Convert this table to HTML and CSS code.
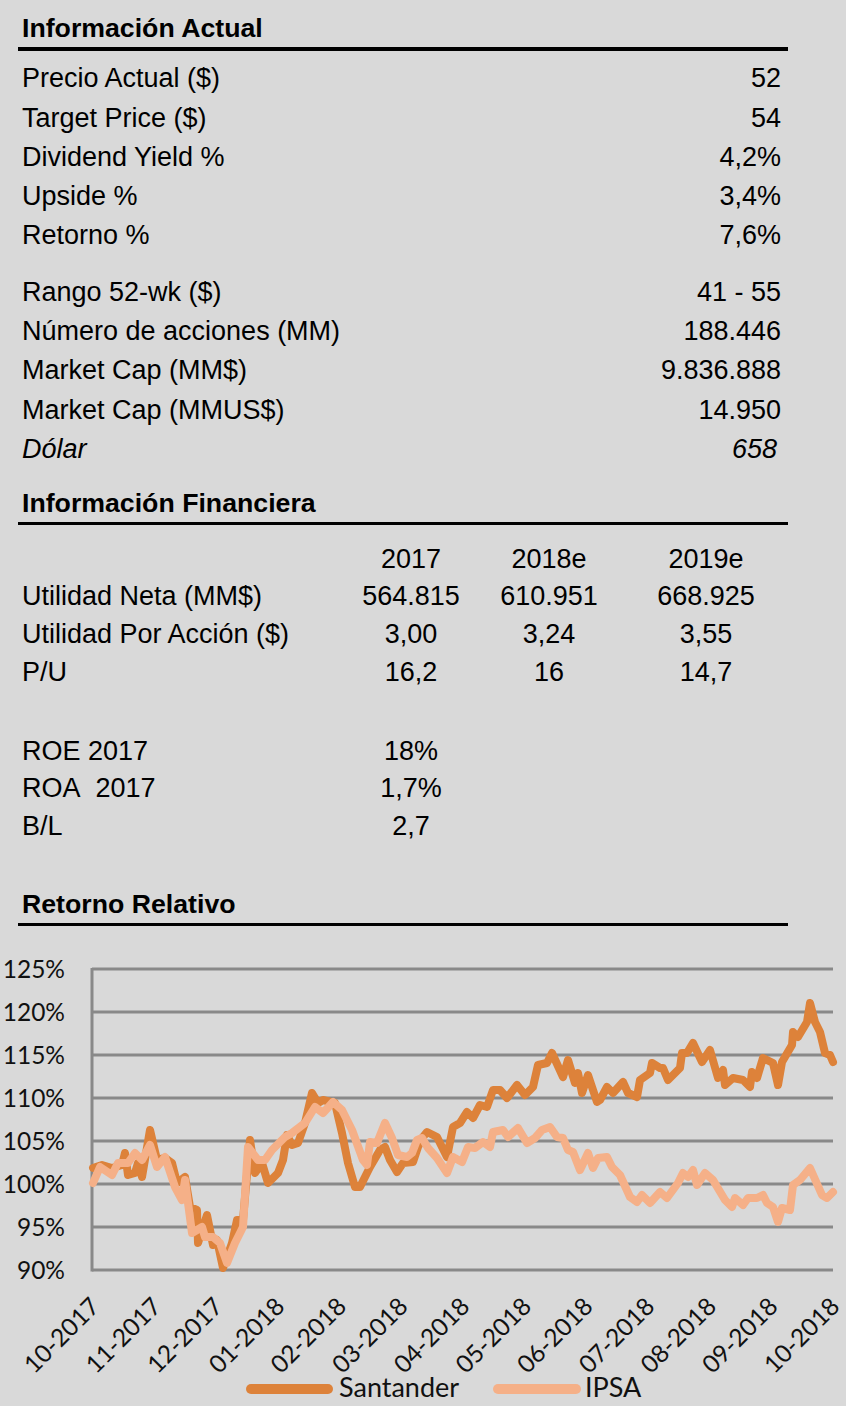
FILE: index.html
```html
<!DOCTYPE html>
<html lang="es">
<head>
<meta charset="utf-8">
<title>Información Actual</title>
<link rel="stylesheet" href="styles.css">
</head>
<body>
<section class="block">
  <h2 class="head head-first">Información Actual</h2>
  <div class="kv-list">
    <div class="kv"><span>Precio Actual ($)</span><span>52</span></div>
    <div class="kv"><span>Target Price ($)</span><span>54</span></div>
    <div class="kv"><span>Dividend Yield %</span><span>4,2%</span></div>
    <div class="kv"><span>Upside %</span><span>3,4%</span></div>
    <div class="kv"><span>Retorno %</span><span>7,6%</span></div>
  </div>
  <div class="kv-list kv-list-2">
    <div class="kv"><span>Rango 52-wk ($)</span><span>41 - 55</span></div>
    <div class="kv"><span>Número de acciones (MM)</span><span>188.446</span></div>
    <div class="kv"><span>Market Cap (MM$)</span><span>9.836.888</span></div>
    <div class="kv"><span>Market Cap (MMUS$)</span><span>14.950</span></div>
    <div class="kv kv-italic"><span>Dólar</span><span>658</span></div>
  </div>

  <h2 class="head head-fin">Información Financiera</h2>
  <div class="fin-table">
    <div class="fin-row"><span class="fin-label"></span><span>2017</span><span>2018e</span><span>2019e</span></div>
    <div class="fin-row"><span class="fin-label">Utilidad Neta (MM$)</span><span>564.815</span><span>610.951</span><span>668.925</span></div>
    <div class="fin-row"><span class="fin-label">Utilidad Por Acción ($)</span><span>3,00</span><span>3,24</span><span>3,55</span></div>
    <div class="fin-row"><span class="fin-label">P/U</span><span>16,2</span><span>16</span><span>14,7</span></div>
  </div>
  <div class="fin-table fin-ratios">
    <div class="fin-row"><span class="fin-label">ROE 2017</span><span>18%</span></div>
    <div class="fin-row"><span class="fin-label">ROA&nbsp; 2017</span><span>1,7%</span></div>
    <div class="fin-row"><span class="fin-label">B/L</span><span>2,7</span></div>
  </div>

  <h2 class="head head-chart">Retorno Relativo</h2>
</section>

<svg class="chart" width="846" height="480" viewBox="0 926 846 480" xmlns="http://www.w3.org/2000/svg">
  <g class="grid">
    <line x1="92" y1="969" x2="833" y2="969"/>
    <line x1="92" y1="1012" x2="833" y2="1012"/>
    <line x1="92" y1="1055" x2="833" y2="1055"/>
    <line x1="92" y1="1098" x2="833" y2="1098"/>
    <line x1="92" y1="1141" x2="833" y2="1141"/>
    <line x1="92" y1="1184" x2="833" y2="1184"/>
    <line x1="92" y1="1227" x2="833" y2="1227"/>
    <line x1="92" y1="1270" x2="833" y2="1270"/>
    <line x1="92" y1="968" x2="92" y2="1271.5"/>
  </g>
  <g class="ylab">
    <text x="65" y="978">125%</text>
    <text x="65" y="1021">120%</text>
    <text x="65" y="1064">115%</text>
    <text x="65" y="1107">110%</text>
    <text x="65" y="1150">105%</text>
    <text x="65" y="1193">100%</text>
    <text x="65" y="1236">95%</text>
    <text x="65" y="1279">90%</text>
  </g>
  <polyline class="s-santander" points="93,1168 102,1165 112,1168 122,1165 125,1153 128,1175 135,1173 138,1163 142,1177 150,1130 157,1160 165,1158 172,1163 177,1183 185,1177 190,1207 197,1210 198,1243 207,1215 213,1245 217,1240 223,1268 232,1243 237,1220 243,1220 250,1140 255,1173 262,1163 268,1183 278,1173 283,1160 287,1135 292,1145 298,1143 305,1123 312,1093 318,1103 323,1100 335,1103 342,1133 348,1163 355,1187 360,1187 370,1167 380,1150 385,1147 390,1160 397,1172 403,1163 413,1162 418,1147 423,1137 427,1132 437,1137 447,1157 453,1127 460,1123 467,1112 473,1118 480,1105 487,1107 493,1090 500,1090 507,1098 517,1085 525,1095 533,1087 538,1065 547,1063 552,1053 563,1077 568,1060 575,1083 578,1073 582,1093 588,1075 597,1102 600,1100 607,1087 613,1093 623,1082 628,1093 637,1097 640,1080 650,1073 652,1063 660,1068 663,1068 668,1080 680,1068 682,1053 687,1053 693,1043 702,1062 710,1050 718,1078 723,1070 725,1085 733,1078 743,1080 750,1087 752,1072 757,1078 763,1058 773,1063 778,1085 782,1062 792,1045 793,1032 798,1037 807,1022 810,1003 815,1022 820,1032 825,1053 830,1055 833,1062"/>
  <polyline class="s-ipsa" points="93,1183 100,1167 112,1175 118,1163 128,1163 135,1153 142,1160 150,1145 157,1167 165,1157 175,1187 182,1200 185,1180 192,1233 202,1227 205,1237 213,1237 220,1243 227,1263 235,1243 243,1227 248,1147 258,1160 265,1160 272,1150 285,1137 292,1133 305,1123 315,1107 323,1113 333,1102 342,1110 352,1130 363,1160 367,1165 370,1142 377,1143 385,1123 392,1138 398,1155 407,1157 412,1153 417,1140 422,1138 428,1148 437,1158 447,1173 453,1157 462,1162 468,1147 475,1148 483,1142 490,1147 493,1132 503,1130 508,1137 518,1128 527,1143 535,1138 542,1130 550,1127 557,1137 563,1138 568,1150 573,1152 580,1170 588,1153 593,1168 598,1158 607,1157 612,1167 620,1175 630,1197 637,1202 642,1195 650,1203 660,1192 667,1198 678,1183 683,1173 688,1177 693,1170 697,1185 705,1173 713,1180 725,1200 732,1207 735,1198 743,1205 748,1198 757,1198 763,1195 767,1203 773,1207 778,1222 782,1208 790,1210 793,1185 800,1180 810,1168 822,1195 827,1198 833,1192"/>
  <g class="xlab">
    <text transform="translate(101,1308) rotate(-45)">10-2017</text>
    <text transform="translate(162.7,1308) rotate(-45)">11-2017</text>
    <text transform="translate(224.3,1308) rotate(-45)">12-2017</text>
    <text transform="translate(286,1308) rotate(-45)">01-2018</text>
    <text transform="translate(347.7,1308) rotate(-45)">02-2018</text>
    <text transform="translate(409.3,1308) rotate(-45)">03-2018</text>
    <text transform="translate(471,1308) rotate(-45)">04-2018</text>
    <text transform="translate(532.7,1308) rotate(-45)">05-2018</text>
    <text transform="translate(594.3,1308) rotate(-45)">06-2018</text>
    <text transform="translate(656,1308) rotate(-45)">07-2018</text>
    <text transform="translate(717.7,1308) rotate(-45)">08-2018</text>
    <text transform="translate(779.3,1308) rotate(-45)">09-2018</text>
    <text transform="translate(841,1308) rotate(-45)">10-2018</text>
  </g>
  <g class="legend">
    <line class="sw-santander" x1="251" y1="1389" x2="328" y2="1389"/>
    <text x="339" y="1397">Santander</text>
    <line class="sw-ipsa" x1="498" y1="1389" x2="576" y2="1389"/>
    <text x="585" y="1397">IPSA</text>
  </g>
</svg>
</body>
</html>
```

FILE: styles.css
```css
html, body {
  margin: 0;
  padding: 0;
}

body {
  width: 846px;
  height: 1406px;
  overflow: hidden;
  background: #d9d9d9;
  color: #000;
  font-family: "Liberation Sans", Arial, sans-serif;
}

.block {
  margin-left: 18px;
  width: 770px;
}

.head {
  margin: 0;
  font-size: 26.7px;
  font-weight: 700;
  line-height: 30px;
  padding: 0 0 4px 4px;
  border-bottom: 3px solid #000;
}

.head-first {
  padding-top: 13px;
  border-bottom-width: 4px;
}

.head-fin {
  margin-top: 18.6px;
}

.head-chart {
  margin-top: 43.7px;
}

.kv-list {
  margin-top: 8.4px;
  font-size: 27px;
  line-height: 39.2px;
}

.kv-list-2 {
  margin-top: 17.5px;
}

.kv {
  display: flex;
  justify-content: space-between;
  padding: 0 7px 0 4px;
}

.kv-italic {
  font-style: italic;
  padding-right: 11px;
}

.fin-table {
  margin-top: 16.1px;
  font-size: 27px;
  line-height: 37.7px;
}

.fin-ratios {
  margin-top: 41.2px;
}

.fin-row {
  display: grid;
  grid-template-columns: 324px 138px 138px 176px;
  white-space: nowrap;
}

.fin-row span {
  text-align: center;
}

.fin-row .fin-label {
  text-align: left;
  padding-left: 4px;
}

.chart {
  display: block;
}

.grid line {
  stroke: #898989;
  stroke-width: 3;
}

.ylab text {
  font-family: Lato, "Open Sans", sans-serif;
  font-size: 24.5px;
  fill: #111;
  text-anchor: end;
}

.xlab text {
  font-family: Lato, "Open Sans", sans-serif;
  font-size: 24.5px;
  fill: #111;
  text-anchor: end;
}

.legend text {
  font-family: Lato, "Open Sans", sans-serif;
  font-size: 27px;
  fill: #111;
}

.s-santander,
.s-ipsa {
  fill: none;
  stroke-width: 8;
  stroke-linejoin: round;
  stroke-linecap: round;
}

.s-santander {
  stroke: #dd823a;
}

.s-ipsa {
  stroke: #f5b088;
}

.sw-santander,
.sw-ipsa {
  stroke-width: 10;
  stroke-linecap: round;
}

.sw-santander {
  stroke: #dd823a;
}

.sw-ipsa {
  stroke: #f5b088;
}
```
